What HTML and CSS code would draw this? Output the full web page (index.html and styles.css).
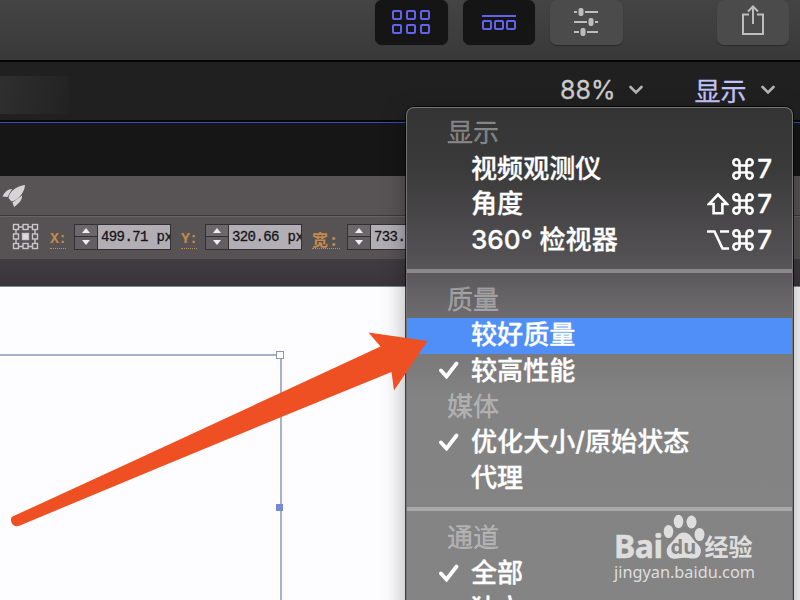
FILE: index.html
```
<!DOCTYPE html>
<html lang="zh-CN">
<head>
    <meta charset="utf-8">
    <title>显示</title>
    <link rel="stylesheet" href="styles.css">
</head>
<body>
    <!-- symbols shared by the menu rows -->
    <svg class="defs" width="0" height="0">
        <symbol id="cmd" viewBox="0 0 22 22">
            <path d="M7.500 7.500h7v7h-7zM7.500 7.500H4.700a3.100 3.100 0 1 1 2.800-2.900zM14.500 7.500V4.600a3.100 3.100 0 1 1 2.800 2.900zM14.500 14.500h2.800a3.100 3.100 0 1 1-2.800 2.900zM7.500 14.500v2.900a3.100 3.100 0 1 1-2.800-2.900z"/>
        </symbol>
        <symbol id="shift" viewBox="0 0 22 22">
            <path d="M11 1.500L20 11h-4.600v9.300H6.600V11H2z"/>
        </symbol>
        <symbol id="option" viewBox="0 0 22 22">
            <path d="M0 2.500h7.500L15.500 19.500H22M13 2.500h9"/>
        </symbol>
        <symbol id="check" viewBox="0 0 20 18">
            <path d="M2 9.500l5.500 6L17.500 2.500"/>
        </symbol>
    </svg>

    <div class="toolbar">
        <div class="tool active">
            <svg width="40" height="26" viewBox="0 0 40 26">
                <rect x="2" y="2" width="8" height="8" rx="1"/>
                <rect x="16" y="2" width="8" height="8" rx="1"/>
                <rect x="30" y="2" width="8" height="8" rx="1"/>
                <rect x="2" y="16" width="8" height="8" rx="1"/>
                <rect x="16" y="16" width="8" height="8" rx="1"/>
                <rect x="30" y="16" width="8" height="8" rx="1"/>
            </svg>
        </div>
        <div class="tool active">
            <svg width="36" height="18" viewBox="0 0 36 18">
                <path d="M1 3h34"/>
                <rect x="2" y="8" width="8" height="8" rx="1"/>
                <rect x="14" y="8" width="8" height="8" rx="1"/>
                <rect x="26" y="8" width="8" height="8" rx="1"/>
            </svg>
        </div>
        <div class="tool">
            <svg width="26" height="30" viewBox="0 0 26 30">
                <path d="M1 5h3M12 5h13M1 15h13M22 15h3M1 25h5M14 25h11"/>
                <rect class="knob" x="5.500" y="1" width="5" height="8" rx="2"/>
                <rect class="knob" x="15.500" y="11" width="5" height="8" rx="2"/>
                <rect class="knob" x="7.500" y="21" width="5" height="8" rx="2"/>
            </svg>
        </div>
        <div class="tool share">
            <svg width="24" height="32" viewBox="0 0 24 32">
                <path d="M8 10.500H2V30h20V10.500h-6M12 20V3M7 7.500L12 2.500l5 5"/>
            </svg>
        </div>
    </div>

    <div class="viewer-bar">
        <div class="thumb"></div>
        <div class="dropdown zoom">88%
            <svg width="16" height="12" viewBox="0 0 16 12"><path d="M2.500 3l5.500 5.500L13.500 3"/></svg>
        </div>
        <div class="dropdown view">显示
            <svg width="16" height="12" viewBox="0 0 16 12"><path d="M2.500 3l5.500 5.500L13.500 3"/></svg>
        </div>
    </div>

    <div class="viewer"></div>

    <div class="app-row">
        <svg width="28" height="28" viewBox="0 0 28 28">
            <path d="M25 1C17 2 9.500 7 8.500 14l3 3.500C18 16 24.500 9 25 1zM12 5C8 5 4.500 8 2.500 12.500L7.500 13zM22 11.500c.5 4-3 8-8 11.500l-1.500-4.500z"/>
        </svg>
    </div>

    <div class="options">
        <svg class="anchor" width="27" height="28" viewBox="0 0 27 28">
            <path d="M4 4h19v19.500H4z"/>
            <rect x="1.500" y="1.500" width="5" height="5"/>
            <rect x="11" y="1.500" width="5" height="5"/>
            <rect x="20.500" y="1.500" width="5" height="5"/>
            <rect x="1.500" y="11" width="5" height="5"/>
            <rect x="20.500" y="11" width="5" height="5"/>
            <rect x="1.500" y="20.500" width="5" height="5"/>
            <rect x="11" y="20.500" width="5" height="5"/>
            <rect x="20.500" y="20.500" width="5" height="5"/>
            <rect class="center" x="10.500" y="10.500" width="6" height="6"/>
        </svg>
        <span class="label x">X:</span>
        <div class="field">
            <div class="stepper"><i class="up"></i><i class="down"></i></div>
            <div class="value">499.71 px</div>
        </div>
        <span class="label y">Y:</span>
        <div class="field">
            <div class="stepper"><i class="up"></i><i class="down"></i></div>
            <div class="value">320.66 px</div>
        </div>
        <span class="label w">宽:</span>
        <div class="field">
            <div class="stepper"><i class="up"></i><i class="down"></i></div>
            <div class="value">733.</div>
        </div>
    </div>

    <div class="tab-strip"></div>

    <div class="canvas">
        <div class="artboard">
            <i class="handle corner"></i>
            <i class="handle side"></i>
        </div>
    </div>

    <div class="menu">
        <div class="group">显示</div>
        <div class="item">
            <span>视频观测仪</span>
            <span class="keys"><svg><use href="#cmd"/></svg>7</span>
        </div>
        <div class="item">
            <span>角度</span>
            <span class="keys"><svg><use href="#shift"/></svg><svg><use href="#cmd"/></svg>7</span>
        </div>
        <div class="item">
            <span>360° 检视器</span>
            <span class="keys"><svg><use href="#option"/></svg><svg><use href="#cmd"/></svg>7</span>
        </div>
        <div class="separator"></div>
        <div class="group">质量</div>
        <div class="item selected"><span>较好质量</span></div>
        <div class="item"><svg class="check"><use href="#check"/></svg><span>较高性能</span></div>
        <div class="group">媒体</div>
        <div class="item"><svg class="check"><use href="#check"/></svg><span>优化大小/原始状态</span></div>
        <div class="item"><span>代理</span></div>
        <div class="separator"></div>
        <div class="group">通道</div>
        <div class="item"><svg class="check"><use href="#check"/></svg><span>全部</span></div>
        <div class="item"><span>独立</span></div>
    </div>

    <svg class="arrow" width="420" height="200" viewBox="0 0 420 200">
        <path d="M7.500 186.500Q120 135 375.500 16.500L363.500 2.500 422.500 11 389 60.500 386.500 42Q200 118 15 195.500Q9 198 6.500 192.500Q5 188 7.500 186.500z"/>
    </svg>

    <div class="watermark">
        <div class="brand">
            <span class="bai">Bai</span>
            <span class="paw">
                <svg width="42" height="46" viewBox="0 0 42 46">
                    <ellipse cx="5.500" cy="17.500" rx="4.800" ry="6.600"/>
                    <ellipse cx="15.500" cy="7.500" rx="4.800" ry="6.800"/>
                    <ellipse cx="28.500" cy="8" rx="5" ry="6.500"/>
                    <ellipse cx="36.500" cy="20.500" rx="5" ry="6.600"/>
                    <path d="M21 18.500c6 0 8 6 12 10 4 3.500 6 7 4.500 11-1.500 4.500-5 5.500-9 5-5-1-9-1-14 0-5 .8-9-.5-10.500-5-1-4.500 1-8 4.500-11 4-3.500 6-10 12.500-10z"/>
                </svg>
                <b>du</b>
            </span>
            <span class="jingyan">经验</span>
        </div>
        <div class="url">jingyan.baidu.com</div>
    </div>
</body>
</html>
```

FILE: styles.css
```
* {
    box-sizing: border-box;
}
body {
    position: relative;
    width: 800px;
    height: 600px;
    margin: 0;
    overflow: hidden;
    display: flex;
    flex-direction: column;
    background: #161616;
    font-family: "Noto Sans CJK SC", sans-serif;
}
svg {
    display: block;
    flex: none;
    fill: none;
}
.defs {
    position: absolute;
}

/* top toolbar */
.toolbar {
    height: 62px;
    flex: none;
    display: flex;
    gap: 15px;
    padding: 0 11px 0 375px;
    background: linear-gradient(#444, #393939);
    border-bottom: 2px solid #050505;
}
.tool {
    width: 72.500px;
    height: 45px;
    display: flex;
    align-items: center;
    justify-content: center;
    border-radius: 7px;
    background: #4b4b4b;
    box-shadow: 0 1px 1px #2a2a2a;
}
.tool svg {
    stroke: #bdbdbd;
    stroke-width: 2;
    margin-top: -1px;
}
.tool.active {
    background: #151515;
    box-shadow: 0 0 1px #222;
}
.tool.active svg {
    stroke: #6262ed;
}
.tool .knob {
    fill: #bdbdbd;
    stroke: none;
}
.tool.share {
    margin-left: auto;
    width: 72px;
}
.tool.share svg {
    margin-top: -5px;
}

/* viewer header */
.viewer-bar {
    height: 61px;
    flex: none;
    display: flex;
    align-items: center;
    background: #202020;
    border-bottom: 1px solid #4444bd;
    box-shadow: inset 0 -2px #080808;
}
.thumb {
    width: 69px;
    height: 38px;
    margin-top: 5px;
    background: linear-gradient(100deg, #2f2f2f, #222);
}
.dropdown {
    display: flex;
    align-items: center;
    gap: 13px;
    height: 40px;
    margin-bottom: 5px;
    font-size: 26px;
    line-height: 40px;
}
.dropdown svg {
    stroke: #b4b4b4;
    stroke-width: 2.6;
    stroke-linecap: round;
}
.dropdown.zoom {
    margin-left: 491px;
    color: #ccc;
    font-family: Inter, sans-serif;
    font-size: 25px;
    -webkit-text-stroke: 0.3px #ccc;
}
.dropdown.view {
    margin-left: 50px;
    color: #c3c3fa;
    -webkit-text-stroke: 0.3px #c3c3fa;
}
.viewer {
    height: 53px;
    flex: none;
    background: #161616;
}

/* drawing app */
.app-row {
    height: 40px;
    flex: none;
    padding: 8px 0 0;
    background: #585456;
    border-bottom: 1px solid #3c383b;
}
.app-row svg {
    fill: #d6d4d6;
}
.options {
    height: 45px;
    flex: none;
    display: flex;
    align-items: center;
    padding: 0 0 3px 12px;
    background: #575355;
    border-top: 1px solid #676366;
    border-bottom: 2px solid #403c3f;
    overflow: hidden;
}
.anchor {
    margin-right: 11px;
    stroke: #c9c6ca;
    stroke-width: 1.4;
}
.anchor rect {
    fill: #575355;
}
.anchor .center {
    fill: #dddbde;
}
.label {
    width: 16px;
    margin-top: 6px;
    border-bottom: 1px dotted #c58a4b;
    color: #c58a4b;
    font: bold 15px/17px "Liberation Mono", monospace;
    letter-spacing: -1px;
}
.label.x {
    margin-right: 8px;
}
.label.y {
    margin: 6px 8px 0 10px;
}
.label.w {
    width: 28px;
    margin: 6px 7px 0 10px;
    font: bold 16px/17px "Noto Sans CJK SC", sans-serif;
    letter-spacing: 3px;
}
.field {
    width: 97px;
    height: 26px;
    flex: none;
    display: flex;
    border: 1px solid #333034;
    background: #b1aeb4;
}
.stepper {
    width: 23px;
    display: flex;
    flex-direction: column;
    align-items: center;
    justify-content: space-around;
    background: linear-gradient(#6b676a 11px, #333034 11px, #333034 12px, #625e61 12px);
    border-right: 1px solid #333034;
}
.up, .down {
    border: 4px solid transparent;
}
.up {
    border-top: 0;
    border-bottom: 5px solid #eee;
}
.down {
    border-bottom: 0;
    border-top: 5px solid #eee;
}
.value {
    flex: 1;
    padding-left: 3px;
    overflow: hidden;
    white-space: nowrap;
    color: #171518;
    font: 14px/24px "Liberation Mono", monospace;
    letter-spacing: -0.6px;
    word-spacing: 1px;
    -webkit-text-stroke: 0.3px #171518;
}
.tab-strip {
    height: 26px;
    flex: none;
    background: linear-gradient(#3f3b40, #3a353b);
    border-bottom: 1px solid #8b888c;
}
.canvas {
    flex: 1;
    background: #fdfcff;
}
.artboard {
    position: relative;
    width: 282px;
    height: 260px;
    margin-top: 67px;
    border: 2px solid #a9b0cb;
    border-left: 0;
    border-bottom: 0;
}
.handle {
    position: absolute;
    width: 8px;
    height: 8px;
}
.handle.corner {
    top: -5px;
    right: -4px;
    background: #fff;
    border: 1.5px solid #8e96b8;
}
.handle.side {
    top: 148px;
    right: -3px;
    width: 7px;
    height: 7px;
    background: #7789d5;
}

/* drop-down menu */
.menu {
    position: absolute;
    left: 406px;
    top: 107px;
    width: 387px;
    height: 520px;
    padding-top: 8px;
    border: 1px solid #747474;
    border-width: 1px 1px 0;
    border-radius: 8px 8px 0 0;
    background: linear-gradient(#353435, #3b3a3b 60px, #535153 150px, #666466 190px, #7a797a 245px, #838384 290px, #848485);
    box-shadow: 0 0 0 1px rgba(0, 0, 0, 0.7), 0 8px 24px rgba(0, 0, 0, 0.35);
    color: #fff;
    font-family: Inter, "Noto Sans CJK SC", sans-serif;
    font-size: 26px;
    font-weight: 500;
    -webkit-text-stroke: 0.3px;
}
.item, .group {
    position: relative;
    display: flex;
    align-items: center;
    height: 35.7px;
    padding: 0 20px 2px 64px;
    white-space: nowrap;
    line-height: 32px;
}
.item {
    font-size: 26.100px;
}
.group {
    padding-left: 40px;
    color: rgba(255, 255, 255, 0.37);
    font-weight: 400;
}
.selected {
    background: #4f8ff7;
}
.keys {
    margin-left: auto;
    display: flex;
    align-items: center;
    gap: 3px;
    font-size: 26px;
}
.keys svg {
    width: 22px;
    height: 22px;
    stroke: #fff;
    stroke-width: 2.6;
}
.check {
    position: absolute;
    left: 32px;
    top: 7px;
    width: 20px;
    height: 18px;
    stroke: #fff;
    stroke-width: 3.8;
    stroke-linecap: round;
}
.separator {
    height: 4px;
    margin: 10px 0 10px;
    background: rgba(255, 255, 255, 0.3);
}

.arrow {
    position: absolute;
    left: 5px;
    top: 330px;
    overflow: visible;
    fill: #ee5023;
}

/* site mark */
.watermark {
    position: absolute;
    left: 614px;
    top: 515px;
    color: #dedede;
}
.brand {
    display: flex;
    align-items: flex-end;
    height: 45px;
}
.bai {
    font: bold 32px/28px "Noto Sans", sans-serif;
    letter-spacing: -0.5px;
    -webkit-text-stroke: 0.5px #dedede;
}
.paw {
    position: relative;
}
.paw svg {
    fill: #dedede;
}
.paw b {
    position: absolute;
    left: 8px;
    top: 22px;
    color: #858586;
    font: bold 20px/22px "Noto Sans", sans-serif;
}
.jingyan {
    font-size: 24px;
    font-weight: 700;
    line-height: 28px;
}
.url {
    font: 16.300px/24px "Noto Sans", sans-serif;
}
```
